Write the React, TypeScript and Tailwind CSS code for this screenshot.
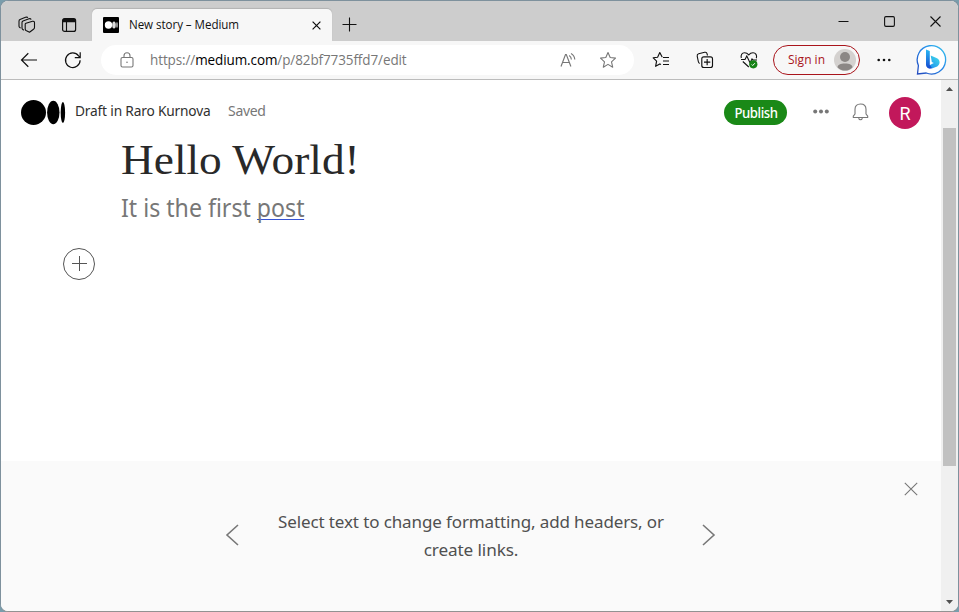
import React from "react";

type IconProps = { className: string; box: string; children: React.ReactNode };

function Icon({ className, box, children }: IconProps) {
  return (
    <svg className={"block shrink-0 " + className} viewBox={box} fill="none" stroke="currentColor">
      {children}
    </svg>
  );
}

function TabStrip() {
  return (
    <div className="flex h-10 shrink-0 bg-[#cdcdcd] text-[#111]">
      <Icon className="ml-[17px] mt-[15px] h-[18px] w-[18px]" box="0 0 18 18">
        <g strokeWidth="1.1" strokeLinejoin="round">
          <path d="M7.2 8.2Q7.200 7.500 8 7.200L14.500 5.200Q16.500 5 16.500 6.500V11.500Q16.500 12.700 15.500 13.300L11.500 16.200 8 14.500Q7.200 14 7.200 13Z" />
          <path d="M5.800 14.200 4.600 13.300Q4 12.900 4 12V6.500Q4 5.400 5 4.900L11 2.700Q12.400 2.300 13.300 3.500" />
          <path d="M2.600 12.200 1.600 11.300Q1 10.800 1 10V5.200Q1 4 2 3.500L7.500 1.300Q9 .8 10 1.500" />
        </g>
      </Icon>
      <Icon className="ml-[25px] mt-4 h-4 w-4" box="0 0 16 16">
        <rect x="1.6" y="1.6" width="13" height="12.8" rx="2" strokeWidth="1.2" />
        <path d="M5.5 5v9.5" strokeWidth="1.1" />
        <path d="M2 3.5h12.4" strokeWidth="3.4" />
      </Icon>
      <div className="ml-[15px] mt-2 flex h-8 w-[240px] rounded-t-[5px] bg-[#f7f7f7] shadow-[0_-1px_1px_rgba(0,0,0,0.13)]">
        <svg className="ml-[11px] mt-2 block h-4 w-4 shrink-0" viewBox="0 0 16 16">
          <rect width="16" height="16" rx="1" fill="#000" />
          <circle cx="5.5" cy="8" r="3.7" fill="#fff" />
          <ellipse cx="11" cy="8" rx="1.8" ry="3.5" fill="#ddd" />
          <ellipse cx="14" cy="8" rx=".7" ry="3.1" fill="#ddd" />
        </svg>
        <span className="ml-[10px] mt-[7px] w-[183px] origin-left scale-x-[0.965] whitespace-nowrap font-['Open_Sans',sans-serif] text-[12px] leading-[18px] tracking-[-0.05px] text-[#111]">
          New story – Medium
        </span>
        <Icon className="mt-3 h-[9px] w-[9px]" box="0 0 9 9">
          <path d="m.6.6 7.8 7.8M8.4.6.6 8.4" strokeWidth="1.2" />
        </Icon>
      </div>
      <Icon className="ml-[10px] mt-4 h-[15px] w-[15px]" box="0 0 15 15">
        <path d="M.5 7.500h14M7.500.5v14" strokeWidth="1.1" />
      </Icon>
      <div className="ml-auto mr-[17px] mt-[15px] flex gap-[35px]">
        <Icon className="h-[11px] w-[11px]" box="0 0 11 11">
          <path d="M.5 5.500h10" />
        </Icon>
        <Icon className="h-[11px] w-[11px]" box="0 0 11 11">
          <rect x=".6" y=".6" width="9.8" height="9.8" rx="1.3" strokeWidth="1.1" />
        </Icon>
        <Icon className="h-[11px] w-[11px]" box="0 0 11 11">
          <path d="m.5.5 10 10M10.500.5.5 10.500" strokeWidth="1.1" />
        </Icon>
      </div>
    </div>
  );
}

function Toolbar() {
  return (
    <div className="flex h-[39px] shrink-0 items-center border-b border-[#bcbcbc] bg-[#f7f7f7] text-[#111]">
      <Icon className="ml-[19px] h-4 w-[18px]" box="0 0 18 16">
        <path d="M17 8H1.500M8.300 1.300 1.500 8l6.800 6.700" strokeWidth="1.2" />
      </Icon>
      <Icon className="ml-[26px] h-[18px] w-[18px]" box="0 0 18 18">
        <path d="M16.100 9.200A7.300 7.300 0 1 1 14.600 4.800L16.200 6.700M16.200 1.300v5.400h-5.400" strokeWidth="1.2" />
      </Icon>
      <div className="ml-[19px] flex h-[30px] w-[533px] items-center rounded-full bg-white text-[#777]">
        <Icon className="ml-[19px] h-4 w-[14px]" box="0 0 14 16">
          <rect x="1" y="5.500" width="12" height="9.500" rx="1.500" strokeWidth="1.100" />
          <path d="M4 5.500V3.800a3 3 0 0 1 6 0v1.700" strokeWidth="1.100" />
          <circle cx="7" cy="10.300" r=".8" fill="currentColor" stroke="none" />
        </Icon>
        <span className="ml-4 w-[260px] origin-left scale-x-[0.963] whitespace-nowrap font-['Open_Sans',sans-serif] text-[14px] leading-5 tracking-[-0.1px]">
          https://<span className="text-black">medium.com</span>/p/82bf7735ffd7/edit
        </span>
        <Icon className="ml-auto h-4 w-[17px]" box="0 0 17 16">
          <path d="m1 14.500 4.500-12h.8l4.600 12M2.700 10.500h6.600M9.200 3.500c1.500 1 2.100 2.100 2.200 4M11 1.500c2.300 1.300 3.600 3.200 3.800 6" strokeWidth="1.150" />
        </Icon>
        <Icon className="ml-[22px] mr-[17px] h-[18px] w-[18px]" box="0 0 18 18">
          <path d="m9 1.500 2.200 5 5.300.6-4 3.700 1.200 5.400L9 13.400l-4.700 2.800 1.200-5.400-4-3.700 5.300-.6Z" strokeWidth="1.100" strokeLinejoin="round" />
        </Icon>
      </div>
      <Icon className="ml-[18px] h-[18px] w-[18px]" box="0 0 18 18">
        <path d="M10.500 5.800 10 5.700 7.800 1.600 5.600 6.200l-4.400.6 3.400 3.400-1 5.100 4.200-2.400 1.200.7M11 6.500h6M11 10h6M11 13.500h6" strokeWidth="1.150" strokeLinejoin="round" />
      </Icon>
      <Icon className="ml-[26px] h-[18px] w-[18px]" box="0 0 18 18">
        <path d="M3.700 12.500C2.700 12 2.500 11.500 2.300 10.500L1.200 5.100C1 3.800 1.500 3.100 2.700 2.800l6-1.500c1.300-.3 2.100.2 2.400 1.500l.4 1.700" strokeWidth="1.100" />
        <rect x="5.800" y="5.800" width="10.700" height="10.700" rx="2" strokeWidth="1.150" />
        <path d="M11.150 8v6.300M8 11.150h6.300" strokeWidth="1.150" />
      </Icon>
      <Icon className="ml-[26px] h-[18px] w-[18px]" box="0 0 18 18">
        <path d="M1.300 7C.5 4.300 2 1.700 4.500 1.700c1.700 0 3 .6 4.300 2.100 1.200-1.500 2.500-2.100 4.200-2.100 2.700 0 4.300 2.700 3.300 5.500M2.800 10.500l6 5.500M1 8.500h4L6.800 5l3.300 7 1.900-4 1 1h4" strokeWidth="1.100" />
        <circle cx="13.300" cy="13.300" r="4.100" fill="#168316" stroke="none" />
        <path d="m11.700 13.500 1 1 2.200-2.300" stroke="#fff" strokeWidth="1" />
      </Icon>
      <div className="ml-[15px] flex h-[30px] w-[87px] items-center justify-between rounded-full border border-[#a9141b] pl-[14px] pr-[3px] text-[#a9141b]">
        <span className="whitespace-nowrap font-['Open_Sans',sans-serif] text-[12px] leading-4">Sign in</span>
        <svg className="block h-[22px] w-[22px]" viewBox="0 0 22 22">
          <circle cx="11" cy="11" r="11" fill="#d4d1cf" />
          <circle cx="11" cy="8" r="5" fill="#8c8785" />
          <path d="M3.500 18.200c0-2.500 3-3.800 7.500-3.800s7.500 1.300 7.500 3.800C16.500 20.500 14 21.600 11 21.600s-5.500-1.100-7.500-3.400" fill="#8c8785" />
        </svg>
      </div>
      <svg className="ml-[17px] block h-1 w-[14px]" viewBox="0 0 14 4" fill="#111">
        <circle cx="1.700" cy="2" r="1.300" /><circle cx="7" cy="2" r="1.300" /><circle cx="12.300" cy="2" r="1.300" />
      </svg>
      <svg className="ml-[25px] -mt-px block h-[32px] w-[32px]" viewBox="0 0 32 32">
        <defs>
          <linearGradient id="bubble" x1="0" y1="1" x2="1" y2="0">
            <stop stopColor="#2349bd" /><stop offset=".55" stopColor="#2688e9" /><stop offset="1" stopColor="#35c5ed" />
          </linearGradient>
          <linearGradient id="stem" x1="0" y1="0" x2="0" y2="1">
            <stop stopColor="#28b8f4" /><stop offset="1" stopColor="#1649d0" />
          </linearGradient>
          <linearGradient id="bowl" x1="0" y1="1" x2="1" y2="0">
            <stop stopColor="#1785ef" /><stop offset="1" stopColor="#45dfe9" />
          </linearGradient>
        </defs>
        <path d="M1.500 30 2.400 21.500A14.200 14.200 0 1 1 10.200 29Z" fill="#fff" stroke="url(#bubble)" strokeWidth="1.300" />
        <path d="m14.700 11.500 5.800 2.600c4.100 1.900 4 6.300.7 8.500l-5.400 1.800-5-1.700 7-3.800-2-1Z" fill="url(#bowl)" />
        <path d="m10 5.500 3.800 1.600v13.600l2.100 3.400c-2.900 1.600-5.900-.5-5.900-3Z" fill="url(#stem)" />
      </svg>
    </div>
  );
}

function StoryHeader() {
  return (
    <header className="flex h-[50px] shrink-0 items-start font-['Noto_Sans',sans-serif]">
      <svg className="ml-5 mt-5 block h-[25px] w-[45px] shrink-0" viewBox="0 0 45 25">
        <circle cx="12.500" cy="12.500" r="12.500" />
        <ellipse cx="32.300" cy="12.500" rx="6.200" ry="11.700" />
        <ellipse cx="41.900" cy="12.500" rx="2.200" ry="10.600" />
      </svg>
      <span className="ml-[9px] mt-[21px] w-[153px] origin-left scale-x-[0.98] whitespace-nowrap text-[14px] leading-5 tracking-[-0.18px] text-[#303030]">Draft in Raro Kurnova</span>
      <span className="mt-[21px] whitespace-nowrap text-[14px] leading-5 tracking-[-0.3px] text-[#777]">Saved</span>
      <button className="ml-auto mt-5 h-[25px] w-[63px] rounded-full bg-[#1a8917] text-[14px] font-medium leading-[25px] tracking-[-0.45px] text-white">
        <span className="inline-block scale-x-[0.94]">Publish</span>
      </button>
      <svg className="ml-[26px] mt-[29px] block h-[5px] w-4" viewBox="0 0 16 5" fill="#777">
        <circle cx="2.200" cy="2.500" r="2" /><circle cx="8" cy="2.500" r="2" /><circle cx="13.800" cy="2.500" r="2" />
      </svg>
      <Icon className="ml-[23px] mt-[23px] h-[18px] w-[17px] text-[#777]" box="0 0 17 18">
        <path d="M3 11V6.300C3 3 5 1 8.500 1S14 3 14 6.300V11l1.700 2.200v1.300H1.300v-1.300ZM6.500 14.500c.2 1.700 1 2.200 2 2.200s1.800-.5 2-2.200" strokeWidth="1.100" strokeLinejoin="round" />
      </Icon>
      <div className="ml-5 mr-5 mt-[17px] h-8 w-8 rounded-full bg-[#c2185b] text-center font-[Roboto,sans-serif] text-[18px] leading-[33px] text-white">R</div>
    </header>
  );
}

function Story() {
  return (
    <main className="flex min-h-0 flex-1 flex-col">
      <h1 className="ml-[120px] mt-1 origin-left scale-x-[1.055] whitespace-nowrap font-['Liberation_Serif',serif] text-[43px] leading-[52px] text-[#292929]">Hello World!</h1>
      <p className="ml-[120px] mt-1 whitespace-nowrap font-['Noto_Sans',sans-serif] text-[25px] leading-[34px] text-[#777]">
        <span className="inline-block origin-left scale-x-[0.925]">It is the first <span className="inline-block border-b border-[#3653d4] leading-[24px]">post</span></span>
      </p>
      <Icon className="ml-[62px] mt-6 h-8 w-8 text-[#555]" box="0 0 32 32">
        <circle cx="16" cy="16" r="15.500" />
        <path d="M9 15.500h15M16.500 8v15" />
      </Icon>
    </main>
  );
}

function Hint() {
  return (
    <aside className="flex h-[150px] shrink-0 bg-[#fafafa] text-[#777]">
      <Icon className="ml-[224px] mt-[63px] h-[22px] w-[14px]" box="0 0 14 22">
        <path d="M13 1 2 11l11 10" strokeWidth="1.600" />
      </Icon>
      <p className="ml-[26px] mt-[47px] w-[412px] text-center font-['Noto_Sans',sans-serif] text-[17px] leading-7 tracking-[-0.12px] text-[#505050]">
        <span className="block whitespace-nowrap">Select text to change formatting, add headers, or</span>
        <span className="block scale-x-[1.01] whitespace-nowrap">create links.</span>
      </p>
      <Icon className="ml-[25px] mt-[63px] h-[22px] w-[14px]" box="0 0 14 22">
        <path d="m1 1 11 10L1 21" strokeWidth="1.600" />
      </Icon>
      <Icon className="ml-auto mr-[23px] mt-[21px] h-[14px] w-[14px]" box="0 0 14 14">
        <path d="m.8.8 12.400 12.400M13.200.8.8 13.200" strokeWidth="1.100" />
      </Icon>
    </aside>
  );
}

function Scrollbar() {
  return (
    <div className="flex w-[17px] shrink-0 flex-col items-center bg-[#f0f0f0]">
      <svg className="mt-[7px] block h-1 w-[7px]" viewBox="0 0 7 4" fill="#505050"><path d="M0 4 3.500 0 7 4Z" /></svg>
      <div className="mt-[37px] h-[338px] w-[13px] bg-[#c1c1c1]" />
      <svg className="mb-[7px] mt-auto block h-1 w-[7px]" viewBox="0 0 7 4" fill="#505050"><path d="m0 0 3.500 4L7 0Z" /></svg>
    </div>
  );
}

export default function App() {
  return (
    <div className="h-[612px] w-[959px] overflow-hidden bg-[#799dac]">
      <div className="flex h-full flex-col overflow-hidden rounded-[8px] border border-[#7e919d] border-b-[#929292] bg-white">
        <TabStrip />
        <Toolbar />
        <div className="flex min-h-0 flex-1">
          <div className="flex min-w-0 flex-1 flex-col">
            <StoryHeader />
            <Story />
            <Hint />
          </div>
          <Scrollbar />
        </div>
      </div>
    </div>
  );
}
